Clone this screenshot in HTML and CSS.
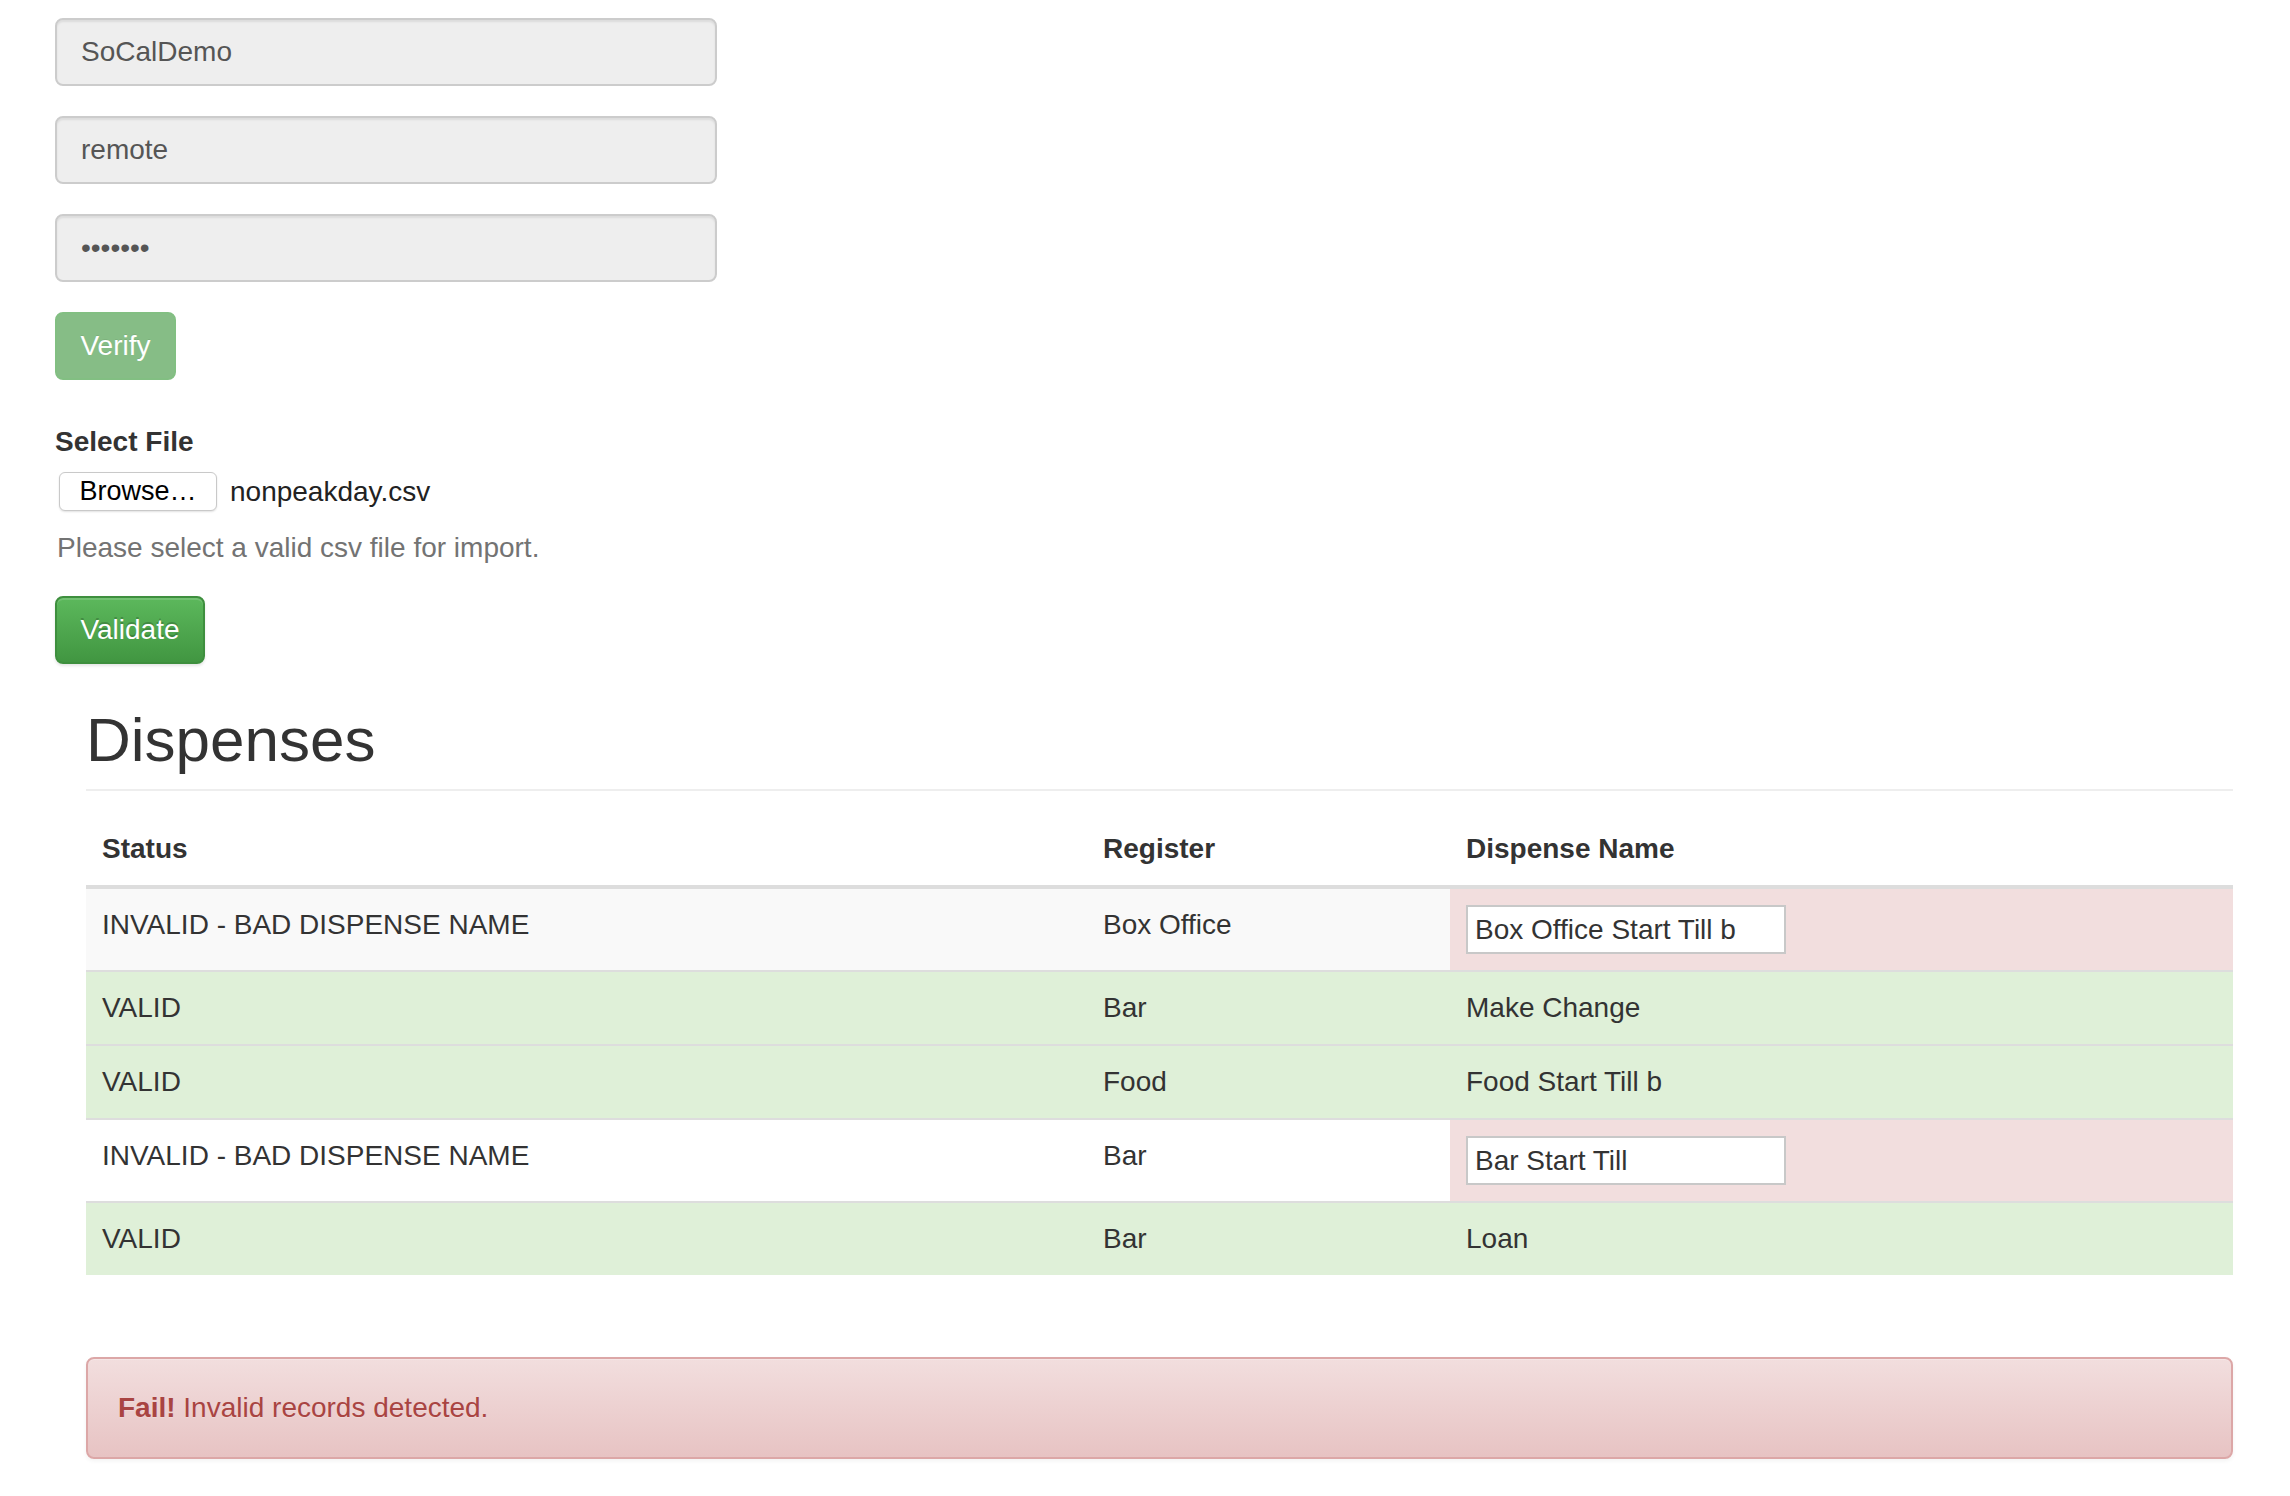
FILE: index.html
```html
<!DOCTYPE html>
<html lang="en">
<head>
<meta charset="utf-8">
<title>Dispenses Import</title>
<link rel="stylesheet" href="styles.css">
</head>
<body>
<div class="page">
  <form class="login">
    <div class="form-group"><input class="form-control" type="text" value="SoCalDemo" readonly></div>
    <div class="form-group"><input class="form-control" type="text" value="remote" readonly></div>
    <div class="form-group"><input class="form-control dots" type="text" value="•••••••" readonly></div>
    <button type="button" class="btn btn-verify">Verify</button>
    <div class="file-group">
      <label class="file-label">Select File</label>
      <div class="file-row">
        <span class="browse">Browse…</span>
        <span class="file-name">nonpeakday.csv</span>
      </div>
      <p class="help">Please select a valid csv file for import.</p>
    </div>
    <button type="button" class="btn btn-validate">Validate</button>
  </form>

  <section class="dispenses">
    <div class="page-header"><h2>Dispenses</h2></div>
    <table class="table">
      <colgroup>
        <col class="c-status">
        <col class="c-register">
        <col class="c-name">
      </colgroup>
      <thead>
        <tr><th>Status</th><th>Register</th><th>Dispense Name</th></tr>
      </thead>
      <tbody>
        <tr class="striped">
          <td>INVALID - BAD DISPENSE NAME</td>
          <td>Box Office</td>
          <td class="danger"><input class="name-input" type="text" value="Box Office Start Till b"></td>
        </tr>
        <tr class="success">
          <td>VALID</td><td>Bar</td><td>Make Change</td>
        </tr>
        <tr class="success">
          <td>VALID</td><td>Food</td><td>Food Start Till b</td>
        </tr>
        <tr>
          <td>INVALID - BAD DISPENSE NAME</td>
          <td>Bar</td>
          <td class="danger"><input class="name-input" type="text" value="Bar Start Till"></td>
        </tr>
        <tr class="success">
          <td>VALID</td><td>Bar</td><td>Loan</td>
        </tr>
      </tbody>
    </table>
    <div class="alert"><strong>Fail!</strong> Invalid records detected.</div>
  </section>
</div>
</body>
</html>
```

FILE: styles.css
```css
html, body {
  margin: 0;
  padding: 0;
  background: #fff;
}

body {
  font-family: "Liberation Sans", Arial, Helvetica, sans-serif;
  font-size: 28px;
  line-height: 40px;
  color: #333;
}

.page {
  padding-bottom: 40px;
}

.login {
  width: 662px;
  padding: 18px 0 0 55px;
  margin: 0;
}

.form-group {
  margin-bottom: 30px;
}

.form-control {
  display: block;
  box-sizing: border-box;
  width: 662px;
  height: 68px;
  margin: 0;
  padding: 12px 24px;
  font-family: inherit;
  font-size: 28px;
  line-height: 40px;
  color: #555;
  background: #eee;
  border: 2px solid #ccc;
  border-radius: 8px;
  box-shadow: inset 0 2px 2px rgba(0, 0, 0, 0.075);
  outline: none;
}

.btn {
  display: block;
  box-sizing: border-box;
  height: 68px;
  margin: 0;
  padding: 12px 24px;
  font-family: inherit;
  font-size: 28px;
  line-height: 40px;
  color: #fff;
  border: 2px solid transparent;
  border-radius: 8px;
  cursor: pointer;
}

.btn-verify {
  width: 121px;
  padding: 12px 0;
  background: #86bd86;
  border-color: #82bf82;
  text-shadow: 0 -1px 0 rgba(0, 0, 0, 0.08);
}

.file-group {
  margin-top: 42px;
}

.file-label {
  display: block;
  font-weight: bold;
  margin-bottom: 10px;
}

.file-row {
  display: flex;
  align-items: center;
  gap: 13px;
  height: 39px;
  padding-left: 4px;
}

.browse {
  box-sizing: border-box;
  width: 158px;
  height: 39px;
  line-height: 37px;
  text-align: center;
  font-size: 27px;
  color: #000;
  background: #fff;
  border: 1px solid #c9c9c9;
  border-radius: 6px;
  box-shadow: 0 1px 2px rgba(0, 0, 0, 0.12);
}

.file-name {
  color: #222;
}

.help {
  margin: 17px 0 28px;
  color: #737373;
  padding-left: 2px;
}

.btn-validate {
  width: 150px;
  padding: 12px 0;
  background: linear-gradient(to bottom, #5cb85c 0%, #419641 100%);
  border-color: #3e8f3e;
  box-shadow: inset 0 2px 0 rgba(255, 255, 255, 0.15), 0 2px 3px rgba(0, 0, 0, 0.1);
  text-shadow: 0 -2px 0 rgba(0, 0, 0, 0.2);
}

.dispenses {
  margin: 43px 57px 0 86px;
}

.page-header {
  padding-bottom: 16px;
  border-bottom: 2px solid #eee;
  margin-bottom: 22px;
}

.page-header h2 {
  margin: 0;
  font-size: 62px;
  line-height: 66px;
  font-weight: normal;
  color: #333;
}

.table {
  width: 100%;
  table-layout: fixed;
  border-collapse: separate;
  border-spacing: 0;
  margin: 0;
}

.c-status { width: 1001px; }
.c-register { width: 363px; }
.c-name { width: 783px; }

.table th {
  text-align: left;
  font-weight: bold;
  padding: 16px;
  vertical-align: bottom;
  border-bottom: 4px solid #ddd;
}

.table td {
  padding: 16px;
  vertical-align: top;
  border-top: 2px solid #ddd;
}

.table tbody tr:first-child td {
  border-top: 0;
}

.table tr.striped td {
  background: #f9f9f9;
}

.table tr.success td {
  background: #dff0d8;
}

.table td.danger,
.table tr.striped td.danger {
  background: #f2dede;
}

.name-input {
  display: block;
  box-sizing: border-box;
  width: 320px;
  height: 49px;
  margin: 0;
  padding: 0 7px;
  font-family: inherit;
  font-size: 28px;
  color: #333;
  background: #fff;
  border: 2px solid #c8c8c8;
  border-radius: 0;
  outline: none;
}

.alert {
  margin-top: 82px;
  padding: 29px 30px;
  border: 2px solid #dca7a7;
  border-radius: 8px;
  color: #a94442;
  background: linear-gradient(to bottom, #f2dede 0%, #e7c3c3 100%);
  text-shadow: 0 1px 0 rgba(255, 255, 255, 0.2);
  box-shadow: inset 0 1px 0 rgba(255, 255, 255, 0.25), 0 2px 4px rgba(0, 0, 0, 0.05);
}

.alert strong {
  font-weight: bold;
}
```
